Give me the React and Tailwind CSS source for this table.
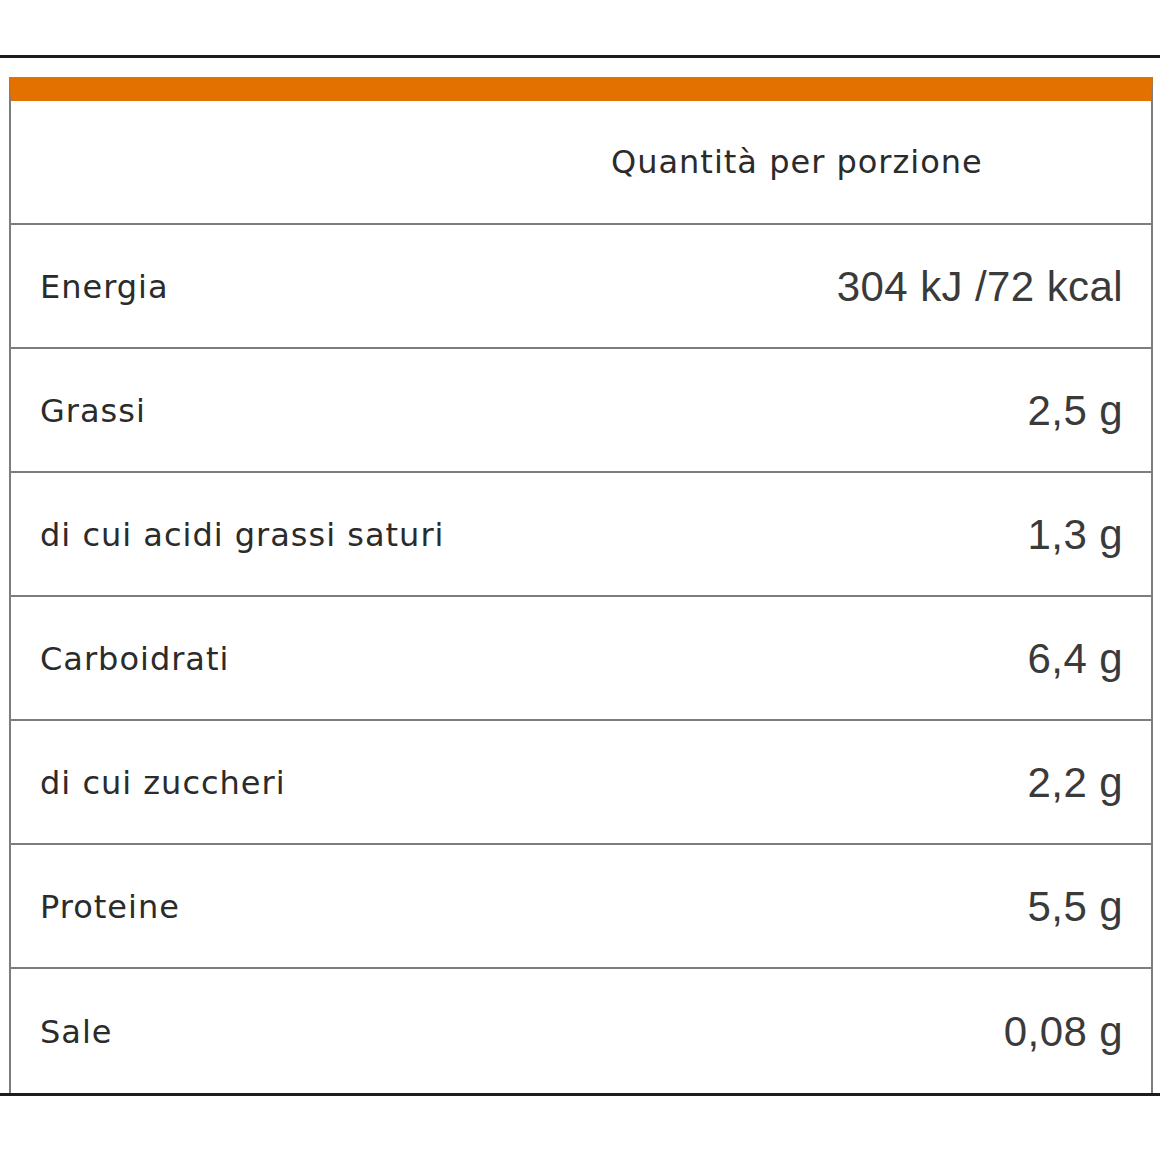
const rows = [
  { label: "Energia", value: "304 kJ /72 kcal" },
  { label: "Grassi", value: "2,5 g" },
  { label: "di cui acidi grassi saturi", value: "1,3 g" },
  { label: "Carboidrati", value: "6,4 g" },
  { label: "di cui zuccheri", value: "2,2 g" },
  { label: "Proteine", value: "5,5 g" },
  { label: "Sale", value: "0,08 g" },
];

const App = () => {
  return (
    <div className="w-[1160px] h-[1160px] bg-white pt-[55px]">
      <div className="border-t-[3px] border-b-[3px] border-[#1c1c1c] pt-[19px] pl-[9px] pr-[7px]">
        {/* Table */}
        <div className="border-t-[24px] border-t-[#e37100] border-x-2 border-x-[#7d7d7d]">
          {/* Header */}
          <div className="grid grid-cols-2 h-[124px] border-b-2 border-[#7d7d7d] items-center">
            <div />
            <div className="px-[30px] pb-[1px] text-[32px] tracking-[1px] text-[#2b2b2b] font-['DejaVu_Sans',sans-serif]">
              Quantità per porzione
            </div>
          </div>

          {/* Rows */}
          {rows.map((r, i) => (
            <div
              key={r.label}
              className={`grid grid-cols-2 h-[124px] items-center ${
                i < rows.length - 1 ? "border-b-2 border-[#7d7d7d]" : ""
              }`}
            >
              <div className="px-[29px] pt-[2px] text-[32px] tracking-[1px] text-[#2b2b2b] font-['DejaVu_Sans',sans-serif]">
                {r.label}
              </div>
              <div className="pr-[28px] text-right text-[42px] tracking-[0.4px] text-[#3a3a3a] font-['Liberation_Sans',Arial,sans-serif]">
                {r.value}
              </div>
            </div>
          ))}
        </div>
      </div>
    </div>
  );
};

export default App;
